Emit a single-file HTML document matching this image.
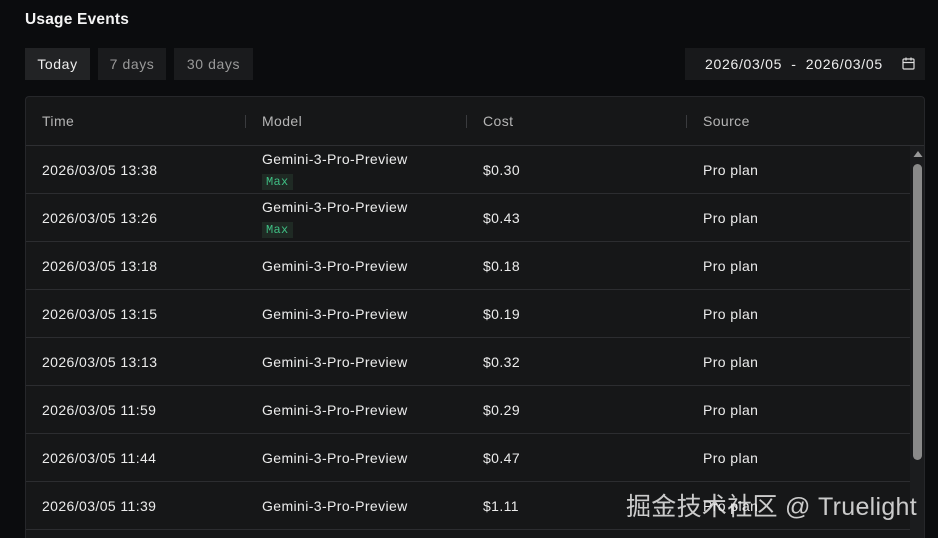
<!DOCTYPE html>
<html><head><meta charset="utf-8"><style>
*{margin:0;padding:0;box-sizing:border-box}
html,body{width:938px;height:538px;overflow:hidden}
body{background:#0b0c0e;font-family:"Liberation Sans","Noto Sans CJK SC",sans-serif;color:#e6e6e6;position:relative;letter-spacing:0.4px}
.title{position:absolute;left:25px;top:11px;font-size:15.5px;font-weight:bold;color:#f4f4f4;letter-spacing:0.2px}
.btn{position:absolute;top:48px;height:32px;line-height:32px;font-size:14px;text-align:center;background:#1a1b1d;color:#9a9a9a;letter-spacing:0.6px}
.date{position:absolute;left:685px;top:48px;width:240px;height:32px;background:#18191b;font-size:14px;line-height:32px;color:#eee;padding-left:20px;letter-spacing:0.7px;white-space:nowrap}
.tbl{position:absolute;left:25px;top:96px;width:900px;height:442px;background:#161718;border:1px solid #26272a;border-bottom:none;border-radius:4px 4px 0 0;overflow:hidden}
.hdr{position:absolute;left:0;top:0;width:900px;height:49px;border-bottom:1px solid #2e2f32;font-size:14px;color:#b5b5b5}
.hdr span{position:absolute;top:16px}
.sep{position:absolute;top:18px;width:1px;height:13px;background:#3a3b3e}
.row{position:absolute;left:0;width:884px;height:48px;border-bottom:1px solid #2c2d30;font-size:14px;color:#ececec}
.row span{position:absolute}
.max{position:absolute;left:236px;top:28px;font-family:"Liberation Mono",monospace;font-size:12px;color:#3fbf84;background:#1f2a24;padding:1px 4px;letter-spacing:0.3px}
.sb{position:absolute;left:884px;top:49px;width:16px;height:420px;background:#1b1c1e}
.thumb{position:absolute;left:3px;top:18px;width:9px;height:296px;background:#8a8a8a;border-radius:5px}
.wm{position:absolute;left:626px;top:487px;font-size:25px;color:rgba(235,235,235,0.85);letter-spacing:0.3px}
</style></head><body>
<div class="title">Usage Events</div>
<div class="btn" style="left:25px;width:65px;background:#222325;color:#eee">Today</div>
<div class="btn" style="left:98px;width:68px">7 days</div>
<div class="btn" style="left:174px;width:79px">30 days</div>
<div class="date">2026/03/05 &nbsp;-&nbsp; 2026/03/05
<svg style="position:absolute;left:217px;top:9px" width="13" height="13" viewBox="0 0 13 13" fill="none" stroke="#ddd" stroke-width="1.2"><rect x="1" y="2" width="11" height="10" rx="1"/><path d="M1 5.5h11M4 0.5v3M9 0.5v3"/></svg></div>
<div class="tbl">
<div class="hdr"><span style="left:16px">Time</span><div class="sep" style="left:219px"></div><span style="left:236px">Model</span><div class="sep" style="left:440px"></div><span style="left:457px">Cost</span><div class="sep" style="left:660px"></div><span style="left:677px">Source</span></div>
<div class="row" style="top:49px"><span style="left:16px;top:16px">2026/03/05 13:38</span><span style="left:236px;top:5px">Gemini-3-Pro-Preview</span><div class="max">Max</div><span style="left:457px;top:16px">$0.30</span><span style="left:677px;top:16px">Pro plan</span></div>
<div class="row" style="top:97px"><span style="left:16px;top:16px">2026/03/05 13:26</span><span style="left:236px;top:5px">Gemini-3-Pro-Preview</span><div class="max">Max</div><span style="left:457px;top:16px">$0.43</span><span style="left:677px;top:16px">Pro plan</span></div>
<div class="row" style="top:145px"><span style="left:16px;top:16px">2026/03/05 13:18</span><span style="left:236px;top:16px">Gemini-3-Pro-Preview</span><span style="left:457px;top:16px">$0.18</span><span style="left:677px;top:16px">Pro plan</span></div>
<div class="row" style="top:193px"><span style="left:16px;top:16px">2026/03/05 13:15</span><span style="left:236px;top:16px">Gemini-3-Pro-Preview</span><span style="left:457px;top:16px">$0.19</span><span style="left:677px;top:16px">Pro plan</span></div>
<div class="row" style="top:241px"><span style="left:16px;top:16px">2026/03/05 13:13</span><span style="left:236px;top:16px">Gemini-3-Pro-Preview</span><span style="left:457px;top:16px">$0.32</span><span style="left:677px;top:16px">Pro plan</span></div>
<div class="row" style="top:289px"><span style="left:16px;top:16px">2026/03/05 11:59</span><span style="left:236px;top:16px">Gemini-3-Pro-Preview</span><span style="left:457px;top:16px">$0.29</span><span style="left:677px;top:16px">Pro plan</span></div>
<div class="row" style="top:337px"><span style="left:16px;top:16px">2026/03/05 11:44</span><span style="left:236px;top:16px">Gemini-3-Pro-Preview</span><span style="left:457px;top:16px">$0.47</span><span style="left:677px;top:16px">Pro plan</span></div>
<div class="row" style="top:385px"><span style="left:16px;top:16px">2026/03/05 11:39</span><span style="left:236px;top:16px">Gemini-3-Pro-Preview</span><span style="left:457px;top:16px">$1.11</span><span style="left:677px;top:16px">Pro plan</span></div>
<div class="sb"><svg style="position:absolute;left:3px;top:4px" width="10" height="8"><path d="M5 1L9.5 7H0.5Z" fill="#999"/></svg><div class="thumb"></div></div>
</div>
<div class="wm">掘金技术社区 @ Truelight</div>
</body></html>
